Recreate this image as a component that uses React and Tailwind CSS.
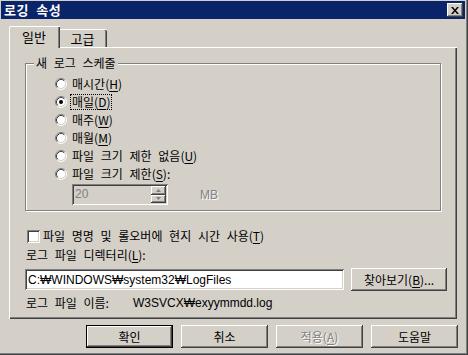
import React from "react";

const raised =
  "shadow-[inset_-1px_-1px_#404040,inset_1px_1px_#ffffff,inset_-2px_-2px_#808080,inset_2px_2px_#d4d0c8]";
const sunken =
  "shadow-[inset_1px_1px_#808080,inset_-1px_-1px_#ffffff,inset_2px_2px_#404040,inset_-2px_-2px_#d4d0c8]";
const latin = "font-['Liberation_Sans','Noto_Sans_CJK_KR',sans-serif] [word-spacing:0]";

const U = ({ c }) => <span className="underline underline-offset-[2px]">{c}</span>;

const Radio = ({ checked }) => (
  <svg width="12" height="12" viewBox="0 0 12 12" className="shrink-0">
    <circle cx="6" cy="6" r="5" fill="#fff" />
    <path d="M2.11 9.89A5.5 5.5 0 0 1 9.89 2.11" stroke="#808080" fill="none" />
    <path d="M9.89 2.11A5.5 5.5 0 0 1 2.11 9.89" stroke="#fff" fill="none" />
    <path d="M2.82 9.18A4.5 4.5 0 0 1 9.18 2.82" stroke="#404040" fill="none" />
    <path d="M9.18 2.82A4.5 4.5 0 0 1 2.82 9.18" stroke="#d4d0c8" fill="none" />
    {checked && <circle cx="6" cy="6" r="2" fill="#000" />}
  </svg>
);

const options = [
  { label: "매시간", key: "H" },
  { label: "매일", key: "D", checked: true },
  { label: "매주", key: "W" },
  { label: "매월", key: "M" },
  { label: "파일 크기 제한 없음", key: "U" },
  { label: "파일 크기 제한", key: "S", colon: true },
];

const Button = ({ children, className = "", disabled, isDefault }) => (
  <div
    className={`flex items-center justify-center bg-[#d4d0c8] ${
      isDefault ? "border border-black" : ""
    } ${raised} ${className}`}
  >
    <span
      className={
        disabled ? "text-[#808080] [text-shadow:1px_1px_0_#fff]" : "text-black"
      }
    >
      {children}
    </span>
  </div>
);

export default function App() {
  return (
    <div className="w-[468px] h-[355px] bg-[#d4d0c8] overflow-hidden font-['Noto_Sans_CJK_KR',sans-serif] text-[12px] leading-[14px] text-black [word-spacing:4px] shadow-[inset_-1px_-1px_#404040,inset_-2px_-2px_#808080]">
      {/* title bar */}
      <div className="ml-[1px] mt-[1px] mr-[3px] h-[18px] bg-[#0a246a] flex items-center justify-between pl-[3px] pr-[2px]">
        <span className="text-white font-bold text-[13px] tracking-[0.5px]">로깅 속성</span>
        <div className={`w-[16px] h-[14px] bg-[#d4d0c8] flex items-center justify-center ${raised}`}>
          <svg width="8" height="7" viewBox="0 0 8 7">
            <path d="M0 0h2l2 2.5L6 0h2L5 3.5 8 7H6L4 4.5 2 7H0l3-3.5z" fill="#000" />
          </svg>
        </div>
      </div>

      <div className="pl-[9px]">
        {/* tabs */}
        <div className="flex items-end h-[28px] pt-[6px]">
          <div className="relative z-10 w-[51px] h-[22px] -mb-[1px] bg-[#d4d0c8] border-l border-t border-white rounded-tl-[2px] shadow-[inset_-1px_0_#404040,inset_-2px_0_#808080] flex items-start justify-center pt-[3px] pr-[2px]">
            <span className="text-[13px]">일반</span>
          </div>
          <div className="w-[47px] h-[18px] bg-[#d4d0c8] border-t border-white rounded-tr-[2px] shadow-[inset_-1px_0_#404040,inset_-2px_0_#808080] flex items-center justify-center pr-[2px]">
            <span className="text-[13px]">고급</span>
          </div>
        </div>

        {/* panel */}
        <div className="w-[448px] h-[272px] bg-[#d4d0c8] border-l border-t border-white shadow-[inset_-1px_-1px_#404040,inset_-2px_-2px_#808080] pt-[15px] pl-[15px]">
          <div className="relative w-[416px] h-[148px] border border-[#808080] shadow-[inset_1px_1px_#fff,1px_1px_#fff] pt-[11px]">
            <span className="absolute -top-[8px] left-[8px] px-[2px] bg-[#d4d0c8]">새 로그 스케줄</span>
            <div className="flex flex-col pl-[29px]">
              {options.map((o) => (
                <div key={o.key} className="flex items-center h-[18px] gap-[5px]">
                  <Radio checked={o.checked} />
                  <span className={o.checked ? "outline outline-1 outline-dotted outline-black px-[1px] -ml-[1px]" : ""}>
                    {o.label}(<U c={o.key} />){o.colon ? ":" : ""}
                  </span>
                </div>
              ))}
            </div>
            <div className="flex items-center mt-[1px] pl-[46px]">
              <div className={`w-[96px] h-[21px] flex items-stretch p-[2px] ${sunken}`}>
                <span className={`flex-1 pl-[1px] text-[#808080] leading-[16px] ${latin}`}>20</span>
                <div className="w-[15px] flex flex-col">
                  <div className={`flex-1 flex items-center justify-center ${raised}`}>
                    <svg width="5" height="3" viewBox="0 0 5 3">
                      <path d="M2.5 0L5 3H0z" fill="#808080" />
                    </svg>
                  </div>
                  <div className={`flex-1 flex items-center justify-center ${raised}`}>
                    <svg width="5" height="3" viewBox="0 0 5 3">
                      <path d="M0 0h5L2.5 3z" fill="#808080" />
                    </svg>
                  </div>
                </div>
              </div>
              <span className={`ml-[32px] text-[#808080] [text-shadow:1px_1px_0_#fff] ${latin}`}>MB</span>
            </div>
          </div>

          <div className="flex items-center gap-[3px] mt-[18px] ml-[2px] h-[14px]">
            <div className={`w-[13px] h-[13px] bg-white ${sunken}`} />
            <span>
              파일 명명 및 롤오버에 현지 시간 사용(<U c="T" />)
            </span>
          </div>

          <div className="mt-[5px] ml-[1px] h-[14px] flex items-center">
            로그 파일 디렉터리(<U c="L" />):
          </div>

          <div className="flex items-center gap-[7px] mt-[6px]">
            <div className={`w-[319px] h-[21px] bg-white flex items-center pl-[3px] ${sunken} ${latin}`}>
              C:₩WINDOWS₩system32₩LogFiles
            </div>
            <Button className="w-[96px] h-[23px]">
              찾아보기(<U c="B" />)...
            </Button>
          </div>

          <div className="flex items-center mt-[5px] h-[14px] ml-[1px]">
            <span className="w-[107px]">로그 파일 이름:</span>
            <span className={latin}>W3SVCX₩exyymmdd.log</span>
          </div>
        </div>

        {/* dialog buttons */}
        <div className="flex gap-[8px] mt-[6px] ml-[77px]">
          <Button isDefault className="w-[87px] h-[23px]">확인</Button>
          <Button className="w-[87px] h-[23px]">취소</Button>
          <Button disabled className="w-[87px] h-[23px]">
            적용(<U c="A" />)
          </Button>
          <Button className="w-[87px] h-[23px]">도움말</Button>
        </div>
      </div>
    </div>
  );
}
